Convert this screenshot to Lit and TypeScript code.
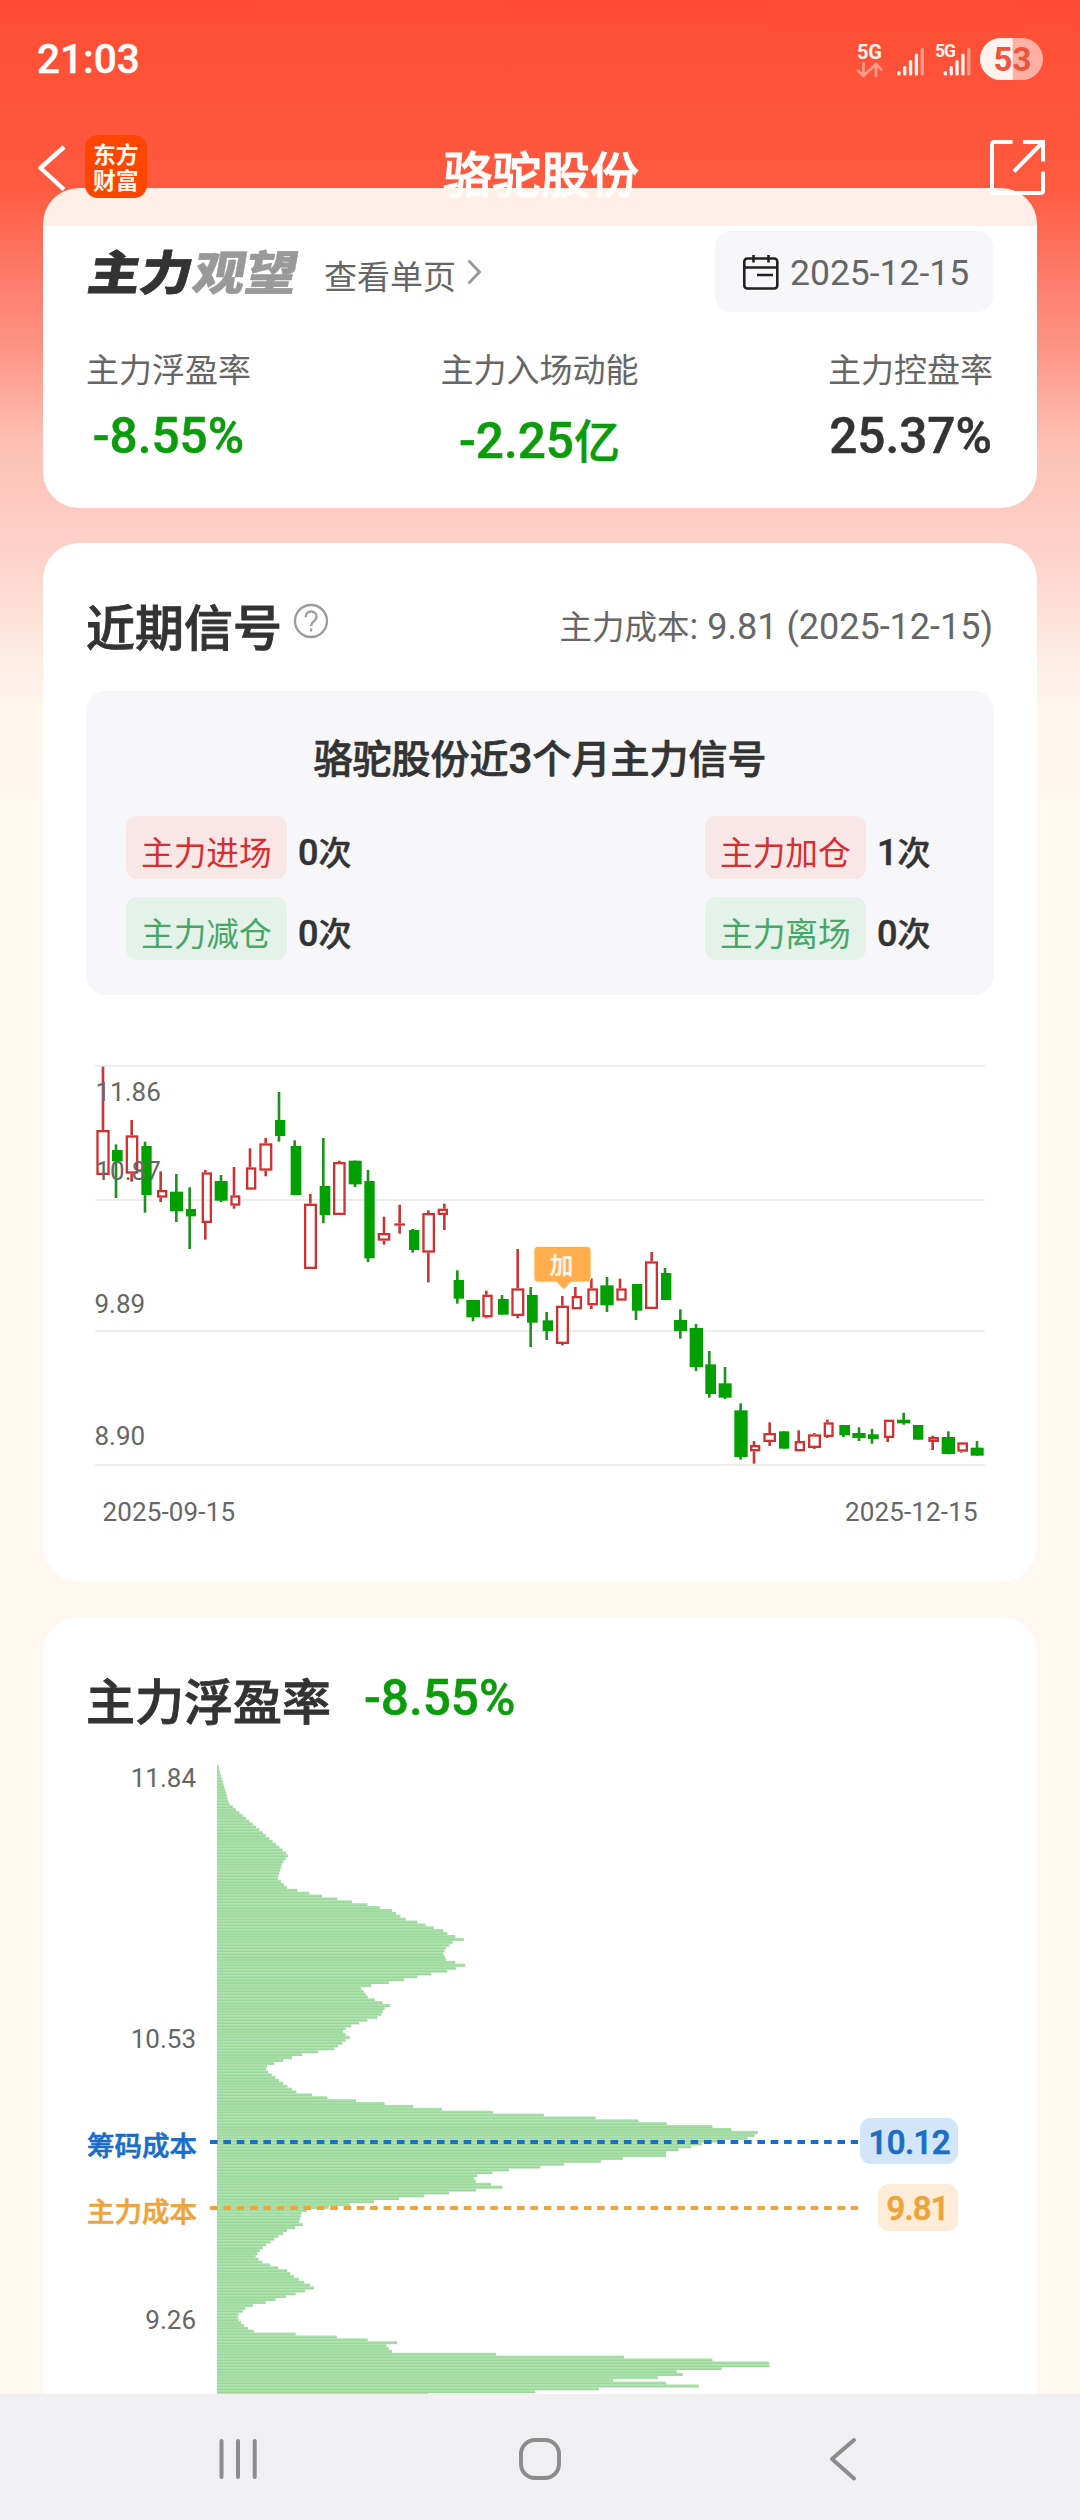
import { LitElement, html, css, svg } from "lit";
import { customElement, property } from "lit/decorators.js";

const SANS = css`Roboto, "Noto Sans CJK SC", sans-serif`;

// Candle: [color, bodyLeft, bodyRight, bodyTop, bodyBottom, wickX, high, low], in thirds of a pixel.
type Candle = [string, number, number, number, number, number, number, number];

const FIRST: Candle[] = [
  ["r", 49, 89, 270, 405, 69, 80, 405],
  ["g", 96, 128, 330, 364, 108, 313, 474],
  ["r", 137, 175, 286, 401, 155, 240, 425],
  ["g", 184, 215, 318, 465, 195, 305, 518],
  ["r", 231, 262, 450, 473, 242, 394, 486],
  ["g", 270, 309, 455, 514, 289, 402, 546],
  ["g", 318, 348, 507, 529, 329, 442, 627],
  ["r", 365, 396, 397, 549, 376, 390, 599],
  ["g", 404, 443, 423, 482, 423, 405, 486],
  ["r", 451, 481, 466, 497, 462, 381, 506],
  ["r", 498, 529, 382, 449, 510, 325, 449],
  ["r", 538, 577, 310, 392, 557, 294, 409],
  ["g", 585, 616, 240, 288, 597, 156, 305],
  ["g", 632, 664, 318, 465, 644, 301, 466],
  ["r", 672, 711, 491, 687, 691, 462, 687],
  ["g", 719, 751, 438, 525, 730, 294, 549],
  ["r", 759, 797, 366, 525, 778, 362, 525],
  ["g", 806, 845, 362, 433, 825, 362, 441],
  ["g", 853, 884, 423, 655, 864, 390, 666],
  ["r", 893, 931, 579, 602, 912, 530, 614],
  ["r", 943, 975, 550, 557, 959, 494, 581],
  ["g", 987, 1018, 570, 630, 998, 567, 638],
];
const SECOND: Candle[] = [
  ["r", 67, 105, 399, 518, 85, 391, 607],
  ["r", 113, 144, 386, 405, 133, 371, 450],
  ["g", 161, 192, 600, 656, 172, 571, 671],
  ["g", 199, 240, 660, 712, 219, 660, 724],
  ["r", 247, 278, 644, 712, 259, 632, 715],
  ["g", 294, 326, 657, 704, 306, 645, 704],
  ["r", 334, 373, 625, 708, 353, 507, 715],
  ["g", 381, 413, 645, 728, 392, 621, 801],
  ["g", 428, 459, 721, 753, 440, 696, 780],
  ["r", 468, 507, 677, 792, 487, 648, 796],
  ["r", 515, 546, 648, 688, 526, 621, 688],
  ["r", 562, 594, 625, 676, 574, 595, 687],
  ["g", 601, 641, 616, 676, 621, 591, 696],
  ["r", 649, 680, 625, 662, 660, 596, 662],
  ["g", 696, 727, 612, 692, 708, 612, 720],
  ["r", 735, 774, 544, 687, 755, 516, 687],
  ["g", 783, 814, 579, 660, 795, 564, 660],
  ["g", 822, 861, 720, 753, 841, 688, 776],
  ["g", 869, 909, 744, 861, 888, 732, 873],
];
const THIRD: Candle[] = [
  ["g", 196, 228, 403, 492, 208, 363, 503],
  ["g", 236, 275, 460, 503, 255, 411, 507],
  ["g", 283, 323, 541, 681, 302, 520, 689],
  ["r", 330, 361, 645, 664, 342, 633, 701],
  ["r", 370, 408, 609, 636, 389, 577, 648],
  ["g", 417, 448, 604, 656, 432, 604, 656],
  ["r", 464, 495, 633, 664, 476, 601, 664],
  ["r", 504, 543, 613, 654, 523, 609, 657],
  ["r", 551, 581, 577, 621, 562, 569, 624],
  ["g", 598, 630, 585, 616, 610, 585, 621],
  ["g", 637, 677, 609, 624, 657, 592, 633],
  ["g", 684, 716, 613, 627, 696, 597, 641],
  ["r", 732, 763, 569, 624, 743, 569, 636],
  ["g", 771, 811, 569, 580, 791, 548, 584],
  ["g", 819, 850, 585, 629, 835, 585, 629],
  ["r", 865, 897, 621, 636, 878, 617, 660],
  ["g", 905, 945, 621, 672, 925, 604, 673],
  ["r", 952, 984, 637, 665, 964, 637, 668],
  ["g", 992, 1031, 653, 677, 1011, 633, 677],
];
const SEGMENTS: { x: number; y: number; items: Candle[] }[] = [
  { x: 80, y: 1040, items: FIRST },
  { x: 400, y: 1080, items: SECOND },
  { x: 640, y: 1230, items: THIRD },
];

// Chip distribution outline: [row, extent] pairs; rows are thirds of a pixel, extents are 1/2.8 pixel.
const PROFILE: number[][] = [
  [495, 443], [610, 473], [765, 640], [790, 622], [835, 609], [862, 636], [871, 665], [880, 698], [887, 734], [895, 776],
  [904, 818], [913, 861], [921, 896], [930, 930], [938, 941], [947, 953], [955, 968], [965, 1001], [973, 1024],
  [982, 1046], [990, 1073], [999, 1085], [1007, 1107], [1016, 1131], [1024, 1099], [1033, 1093], [1045, 1080],
  [1060, 1073], [1077, 1081], [1086, 1107], [1094, 1134], [1103, 1109], [1111, 1085], [1120, 1040], [1129, 1001],
  [1137, 963], [1146, 921], [1155, 871], [1163, 843], [1172, 850], [1180, 856], [1189, 862], [1197, 882],
  [1206, 903], [1215, 924], [1223, 910], [1240, 900], [1250, 889], [1258, 861], [1267, 838], [1275, 815],
  [1284, 800], [1292, 793], [1301, 800], [1309, 812], [1318, 800], [1327, 791], [1336, 779], [1345, 768],
  [1353, 723], [1362, 678], [1370, 650], [1378, 625], [1387, 600], [1396, 580], [1405, 577], [1414, 583],
  [1422, 593], [1431, 603], [1440, 614], [1448, 625], [1457, 637], [1466, 650], [1474, 662], [1483, 706],
  [1492, 749], [1500, 829], [1509, 909], [1517, 989], [1526, 1070], [1534, 1212], [1543, 1355], [1552, 1500],
  [1561, 1620], [1570, 1699], [1578, 1827], [1587, 1880], [1595, 1954], [1604, 1945], [1612, 1925], [1621, 1861],
  [1630, 1797], [1638, 1768], [1647, 1732], [1656, 1697], [1665, 1697], [1673, 1576], [1682, 1515], [1690, 1411],
  [1699, 1345], [1707, 1257], [1716, 1211], [1724, 1168], [1733, 1160], [1742, 1165], [1751, 1207], [1760, 1239],
  [1768, 1165], [1777, 1090], [1785, 1020], [1794, 949], [1803, 879], [1811, 812], [1820, 753], [1829, 692],
  [1837, 677], [1850, 674], [1863, 669], [1872, 680], [1880, 659], [1889, 636], [1897, 625], [1906, 612],
  [1914, 600], [1923, 590], [1932, 577], [1940, 568], [1949, 560], [1958, 553], [1967, 548], [1976, 556],
  [1984, 567], [1993, 588], [2002, 611], [2010, 636], [2019, 645], [2028, 655], [2036, 669], [2045, 684],
  [2053, 700], [2062, 711], [2071, 686], [2080, 660], [2088, 633], [2097, 604], [2106, 576], [2114, 540],
  [2123, 519], [2131, 512], [2140, 500], [2148, 498], [2157, 500], [2166, 507], [2174, 515], [2183, 527],
  [2192, 543], [2201, 660], [2209, 775], [2218, 862], [2227, 944], [2236, 914], [2244, 921], [2253, 930],
  [2261, 1221], [2269, 1579], [2278, 1827], [2287, 1985], [2295, 1987], [2304, 1853], [2313, 1727], [2321, 1744],
  [2330, 1674], [2339, 1549], [2347, 1697], [2356, 1789], [2364, 1509], [2373, 1331], [2381, 1031],
];

function extentAt(row: number): number {
  for (let i = 1; i < PROFILE.length; i++) {
    const [r1, e1] = PROFILE[i];
    if (row <= r1) {
      const [r0, e0] = PROFILE[i - 1];
      // Dense stretches snap to the nearest sample so single-bar peaks keep their reach.
      if (r1 - r0 < 11) return row - r0 < r1 - row ? e0 : e1;
      return e0 + ((e1 - e0) * (row - r0)) / (r1 - r0);
    }
  }
  return PROFILE[PROFILE.length - 1][1];
}

@customElement("status-bar")
class StatusBar extends LitElement {
  static styles = css`
    :host { display: flex; height: 118px; box-sizing: border-box; padding: 38px 37px 0 37px; justify-content: space-between; font-family: ${SANS}; color: #fff; }
    .time { font-size: 40.5px; font-weight: 500; line-height: 43px; -webkit-text-stroke: 0.4px #fff; }
    .right { display: block; width: 190px; height: 42px; }
  `;
  render() {
    const tops = [71, 66, 60, 53.5, 48];
    const bars = (x: number) => tops.map((t, i) => svg`<rect x=${x + i * 5.85 - 1.6} y=${t} width="3.3" height=${75.5 - t} rx="1.5" fill=${i === 4 ? "#ff9d8b" : "#fff4f0"} />`);
    return html`
      <div class="time">21:03</div>
      <svg class="right" viewBox="853 38 190 42" font-family="Roboto, sans-serif" font-weight="700">
        <text x="857" y="59.3" font-size="20" textLength="25" fill="#fff4f0">5G</text>
        <path d="M863.4 63.5v12.5M858 70.5l5.4 5.5 5.4-5.5M876 76V64M870.6 69.5l5.4-5.5 5.4 5.5" fill="none" stroke="#ff9a88" stroke-width="2.8" stroke-linecap="round" stroke-linejoin="round" />
        ${bars(898.8)}
        <text x="935" y="57" font-size="17.5" textLength="21" fill="#fff4f0">5G</text>
        ${bars(945.3)}
        <rect x="980" y="38" width="63" height="42" rx="21" fill="#ffb0a5" />
        <path d="M1012.7 38H1001a21 21 0 0 0 0 42h11.7z" fill="#fff2ef" />
        <text x="993.5" y="71" font-size="33" textLength="38" fill="#ec543c">53</text>
      </svg>
    `;
  }
}

@customElement("title-bar")
class TitleBar extends LitElement {
  static styles = css`
    :host { display: flex; height: 108px; box-sizing: border-box; padding: 17px 33px 0 37px; font-family: ${SANS}; color: #fff; align-items: flex-start; }
    .side { display: flex; flex: 1; align-items: flex-start; }
    .end { flex: 0 0 auto; width: 408px; justify-content: flex-end; }
    .back { width: 30px; height: 62px; margin-right: 18px; }
    .badge { width: 62px; height: 63px; border-radius: 13px; background: #ff4600; display: flex; justify-content: center; box-sizing: border-box; padding-top: 6px; font-family: "Noto Sans CJK SC", sans-serif; font-weight: 700; font-size: 22.8px; line-height: 26px; color: #fff6ee; }
    .brand { width: 46px; height: 52px; word-break: break-all; }
    .name { font-size: 49px; font-weight: 500; line-height: 72px; margin-top: 6px; color: #fffdfc; -webkit-text-stroke: 1px #fffdfc; white-space: nowrap; }
    .share { width: 58px; height: 62px; }
  `;
  render() {
    return html`
      <div class="side">
        <svg class="back" viewBox="37 135 30 62"><path d="M64 147 40.500 168 64 189.500" fill="none" stroke="#fff" stroke-width="4.400" stroke-linejoin="round" /></svg>
        <div class="badge"><div class="brand">东方财富</div></div>
      </div>
      <div class="name">骆驼股份</div>
      <div class="side end">
        <svg class="share" viewBox="990 135 58 62" fill="none" stroke="#fff" stroke-width="4"><path d="M1013.500 142H995.500q-2.500 0-2.500 2.500V190.500q0 2.500 2.500 2.500H1041.500q2.500 0 2.500-2.500V171.500M1024 142h20v19.500M1043.500 142.500 1015 171.500" /></svg>
      </div>
    `;
  }
}

@customElement("stat-cell")
class StatCell extends LitElement {
  @property() label = "";
  @property() value = "";
  @property() unit = "";
  @property() tone = "";
  static styles = css`
    :host { display: flex; flex-direction: column; align-items: center; font-family: ${SANS}; }
    .label { font-size: 33px; line-height: 48px; color: #666; }
    .value { font-size: 49.5px; line-height: 60px; font-weight: 500; margin-top: 11px; white-space: nowrap; color: #333; -webkit-text-stroke: 0.5px currentColor; }
    .green { color: #0a9c0a; }
    .low { margin-top: 16px; }
    .unit { font-size: 46px; font-weight: 500; line-height: 1; }
  `;
  render() {
    return html`
      <div class="label">${this.label}</div>
      <div class="value ${this.tone} ${this.unit ? "low" : ""}">${this.value}${this.unit ? html`<span class="unit">${this.unit}</span>` : ""}</div>
    `;
  }
}

@customElement("signal-count")
class SignalCount extends LitElement {
  @property() label = "";
  @property() count = "0";
  @property() tone = "red";
  static styles = css`
    :host { display: flex; height: 63px; font-family: ${SANS}; }
    .chip { width: 161px; height: 63px; border-radius: 11px; box-sizing: border-box; padding-left: 15px; white-space: nowrap; font-size: 32.7px; line-height: 76px; margin-right: 11px; }
    .red { background: #f9e6e6; color: #d52f2f; }
    .green { background: #e4f2ea; color: #45a866; }
    .count { font-size: 36px; font-weight: 500; line-height: 75px; color: #333; -webkit-text-stroke: 0.5px currentColor; }
    .unit { font-size: 33px; font-weight: 500; line-height: 1; }
  `;
  render() {
    return html`<div class="chip ${this.tone}">${this.label}</div><div class="count">${this.count}<span class="unit">次</span></div>`;
  }
}

@customElement("candle-chart")
class CandleChart extends LitElement {
  static styles = css`
    :host { display: block; }
    .plot { display: block; width: 908px; height: 500px; font-family: ${SANS}; }
    .axis { font-size: 26px; fill: #666; }
    .mark { font-size: 24px; font-weight: 700; fill: #fff4e0; }
  `;
  render() {
    const draw = (ox: number, oy: number, c: Candle) => {
      const [k, l, r, t, b, w, hi, lo] = c;
      const X = (v: number) => ox + v / 3;
      const Y = (v: number) => oy + v / 3;
      if (k === "g") {
        return svg`<rect x=${X(w) - 1.3} y=${Y(hi)} width="2.600" height=${(lo - hi) / 3} fill="#1c921c" /><rect x=${X(l)} y=${Y(t)} width=${(r - l) / 3} height=${(b - t) / 3} fill="#00a000" />`;
      }
      const bh = (b - t) / 3;
      return svg`
        <rect x=${X(w) - 1.3} y=${Y(hi)} width="2.600" height=${Math.max(0, (t - hi) / 3)} fill="#cc3333" />
        <rect x=${X(w) - 1.3} y=${Y(b)} width="2.600" height=${Math.max(0, (lo - b) / 3)} fill="#cc3333" />
        ${bh < 3
          ? svg`<rect x=${X(l)} y=${Y(t)} width=${(r - l) / 3} height=${bh} fill="#d23030" />`
          : svg`<rect x=${X(l) + 1.15} y=${Y(t) + 1.15} width=${(r - l) / 3 - 2.3} height=${bh - 2.3} fill="none" stroke="#d23030" stroke-width="2.300" />`}`;
    };
    return html`
      <svg class="plot" viewBox="86 1040 908 500">
        ${[1066, 1200, 1331, 1465].map((y) => svg`<rect x="95" y=${y - 1} width="890" height="2" fill="#ededed" />`)}
        ${SEGMENTS.map((s) => s.items.map((c) => draw(s.x, s.y, c)))}
        <g class="axis">
          <text x="95.500" y="1101">11.86</text>
          <text x="95.500" y="1180">10.87</text>
          <text x="94.500" y="1312.500">9.89</text>
          <text x="94.500" y="1445">8.90</text>
          <text x="102.500" y="1521" textLength="132.500">2025-09-15</text>
          <text x="845" y="1521" textLength="132.500">2025-12-15</text>
        </g>
        <path d="M538 1247h48.500q4 0 4 4v26.500q0 4-4 4H571l-7.200 7.500-7.300-7.500H538q-3.500 0-3.500-4v-26.500q0-4 3.500-4z" fill="#ffad4d" stroke="#ffeccc" stroke-width="1.500" paint-order="stroke" />
        <text class="mark" x="561.500" y="1273.500" text-anchor="middle">加</text>
      </svg>
    `;
  }
}

@customElement("chip-chart")
class ChipChart extends LitElement {
  static styles = css`
    :host { display: block; }
    .plot { display: block; width: 908px; height: 654px; font-family: ${SANS}; }
    .axis { font-size: 26px; fill: #666; }
    .name { font-size: 27.5px; font-weight: 500; stroke-width: 0.6px; }
    .price { font-size: 33px; font-weight: 500; stroke-width: 0.7px; }
    .blue { fill: #1a6dc8; stroke: #1a6dc8; }
    .orange { fill: #eda43c; stroke: #eda43c; }
  `;
  render() {
    const pitch = 8.645;
    const rows = Array.from({ length: 219 }, (_, i) => {
      const row = 499 + i * pitch;
      const w = (extentAt(row) - 440) / 2.8;
      const y = 1600 + (row - pitch / 2) / 3;
      return svg`<rect x="217" y=${y} width=${w} height="2.900" fill="#a8e0a8" /><rect x="217" y=${y + 1.6} width=${w} height="1.200" fill="#9ad79b" />`;
    });
    return html`
      <svg class="plot" viewBox="86 1740 908 654">
        ${rows}
        <g class="axis" text-anchor="end">
          <text x="196" y="1787">11.84</text>
          <text x="196" y="2048">10.53</text>
          <text x="196" y="2329">9.26</text>
        </g>
        <path d="M210 2142H858" stroke="#1a6dc8" stroke-width="4" stroke-dasharray="7.600 5.750" />
        <path d="M210 2208H858" stroke="#eda43c" stroke-width="4" stroke-dasharray="7.600 5.750" />
        <text class="name blue" x="87" y="2155.500">筹码成本</text>
        <text class="name orange" x="87" y="2221.500">主力成本</text>
        <rect x="860" y="2118" width="98" height="46" rx="11" fill="#d3e5f9" />
        <rect x="878" y="2184" width="80" height="47" rx="11" fill="#fdecd8" />
        <text class="price blue" x="868.500" y="2154.300" textLength="82">10.12</text>
        <text class="price orange" x="886.500" y="2220.300" textLength="63">9.81</text>
      </svg>
    `;
  }
}

@customElement("nav-keys")
class NavKeys extends LitElement {
  static styles = css`
    :host { display: flex; height: 126px; background: #f0f0f2; justify-content: space-between; align-items: flex-start; box-sizing: border-box; padding: 40px 212px 0 212px; }
    .key { width: 50px; height: 50px; }
  `;
  render() {
    return html`
      <svg class="key" viewBox="212 2434 50 50"><path d="M221.500 2441v36M238 2441v36M254.700 2441v36" stroke="#8c8c8c" stroke-width="4" stroke-linecap="round" /></svg>
      <svg class="key" viewBox="515 2434 50 50"><rect x="521" y="2440" width="38" height="38" rx="14" fill="none" stroke="#8c8c8c" stroke-width="4" /></svg>
      <svg class="key" viewBox="818 2434 50 50"><path d="M854 2440 832 2459 854 2478.500" fill="none" stroke="#8c8c8c" stroke-width="4" stroke-linecap="round" stroke-linejoin="round" /></svg>
    `;
  }
}

@customElement("app-root")
class AppRoot extends LitElement {
  static styles = css`
    :host { display: block; font-family: ${SANS}; color: #333; }
    .screen { position: relative; display: flex; flex-direction: column; width: 1080px; height: 2520px; overflow: hidden; background: linear-gradient(#ff4d33 0, #ff5238 80px, #ff5a41 188px, #ff6650 220px, #fe8474 300px, #fe9384 345px, #fec0b4 440px, #fdcbc2 510px, #fdd2ca 555px, #fde0d7 610px, #fef0e6 670px, #fff7ee 720px, #fff8f0 800px, #fff8f1 100%); }
    .header { position: absolute; inset: 0 0 auto 0; }
    .content { display: flex; flex-direction: column; gap: 35px; flex: 1; min-height: 0; box-sizing: border-box; padding: 188px 43px 0 43px; overflow: hidden; }
    .card { flex: none; background: #fff; border-radius: 36px; box-sizing: border-box; padding: 0 43px; }
    .summary { height: 320px; padding: 43px 44px 0 43px; background: linear-gradient(#ffefe6 38px, #fff 38px); }
    .signals { height: 1039px; padding-top: 56px; }
    .profit { height: 860px; padding-top: 56px; }
    .top { display: flex; align-items: center; height: 81px; }
    .logo { width: 216px; height: 76px; overflow: visible; }
    .more { display: flex; align-items: center; flex: 1; margin-left: 22px; font-size: 33px; line-height: 44px; color: #666; }
    .more-text { padding-top: 12px; }
    .chevron { width: 16px; height: 28px; margin-left: 10px; }
    .date { display: flex; align-items: center; width: 278px; height: 81px; box-sizing: border-box; padding-left: 26px; border-radius: 16px; background: #f7f7fa; font-size: 35.500px; color: #666; }
    .date-text { padding-top: 2px; }
    .calendar { width: 38px; height: 38px; margin-right: 11px; }
    .stats { display: flex; justify-content: space-between; margin-top: 35px; }
    .heading { display: flex; height: 60px; }
    .title { font-size: 49px; line-height: 60px; font-weight: 500; margin-top: 1px; -webkit-text-stroke: 0.9px #333; }
    .help { width: 36px; height: 36px; margin: 4px auto 0 11px; }
    .cost { font-size: 36px; line-height: 60px; margin: -2px 1px 0 0; color: #666; white-space: nowrap; }
    .cjk { font-size: 32.500px; line-height: 1; }
    .panel { height: 304px; margin-top: 32px; box-sizing: border-box; padding: 42px 40px 0 40px; border-radius: 20px; background: #f7f7fa; }
    .panel-title { text-align: center; font-size: 39px; line-height: 54px; font-weight: 500; -webkit-text-stroke: 0.7px #333; }
    .digit { font-size: 42px; line-height: 1; font-weight: 500; }
    .counts { display: grid; grid-template-columns: 579px auto; row-gap: 18px; margin-top: 29px; }
    .candles { margin-top: 45px; }
    .rate { font-size: 49.5px; line-height: 60px; font-weight: 500; -webkit-text-stroke: 0.5px #0a9c0a; color: #0a9c0a; margin: -5px 0 0 33px; }
    .chips { margin-top: 7px; }
  `;
  render() {
    return html`
      <div class="screen">
        <div class="content">
          <section class="card summary">
            <div class="top">
              <svg class="logo" viewBox="82 233 216 76" font-family="Noto Sans CJK SC, sans-serif" font-weight="900" font-size="50">
                <g transform="translate(84 288.500) skewX(-10) scale(1.040 .94)">
                  <text x="-2" y="0" fill="#333" stroke="#333" stroke-width="0.800">主力</text>
                  <text x="99" y="0" fill="#999" stroke="#999" stroke-width="0.500">观望</text>
                </g>
              </svg>
              <div class="more">
                <span class="more-text">查看单页</span>
                <svg class="chevron" viewBox="0 0 16 28"><path d="M2.500 2.500 13.500 14 2.500 25.500" fill="none" stroke="#999" stroke-width="2.800" /></svg>
              </div>
              <div class="date">
                <svg class="calendar" viewBox="741 252 38 38" fill="none" stroke="#222"><rect x="744.300" y="257.500" width="33" height="30" rx="3" stroke-width="2.600" /><path d="M744 266.500h33M753.500 254v7.500M768.500 254v7.500M757 274h16" stroke-width="2.600" /></svg>
                <span class="date-text">2025-12-15</span>
              </div>
            </div>
            <div class="stats">
              <stat-cell label="主力浮盈率" value="-8.55%" tone="green"></stat-cell>
              <stat-cell label="主力入场动能" value="-2.25" unit="亿" tone="green"></stat-cell>
              <stat-cell label="主力控盘率" value="25.37%"></stat-cell>
            </div>
          </section>

          <section class="card signals">
            <div class="heading">
              <div class="title">近期信号</div>
              <svg class="help" viewBox="0 0 36 36" fill="none" stroke="#9c9c9c" stroke-width="2.300"><circle cx="18" cy="18" r="16" /><path d="M12.600 14.200c0-3.300 2.200-5.700 5.500-5.700s5.500 2.200 5.500 5.100c0 4.400-5.500 4.600-5.500 9.400M18.100 25.600v3" /></svg>
              <div class="cost"><span class="cjk">主力成本</span>: 9.81 (2025-12-15)</div>
            </div>
            <div class="panel">
              <div class="panel-title">骆驼股份近<span class="digit">3</span>个月主力信号</div>
              <div class="counts">
                <signal-count label="主力进场" count="0"></signal-count>
                <signal-count label="主力加仓" count="1"></signal-count>
                <signal-count label="主力减仓" count="0" tone="green"></signal-count>
                <signal-count label="主力离场" count="0" tone="green"></signal-count>
              </div>
            </div>
            <candle-chart class="candles"></candle-chart>
          </section>

          <section class="card profit">
            <div class="heading">
              <div class="title">主力浮盈率</div>
              <div class="rate">-8.55%</div>
            </div>
            <chip-chart class="chips"></chip-chart>
          </section>
        </div>
        <nav-keys></nav-keys>
        <div class="header">
          <status-bar></status-bar>
          <title-bar></title-bar>
        </div>
      </div>
    `;
  }
}
